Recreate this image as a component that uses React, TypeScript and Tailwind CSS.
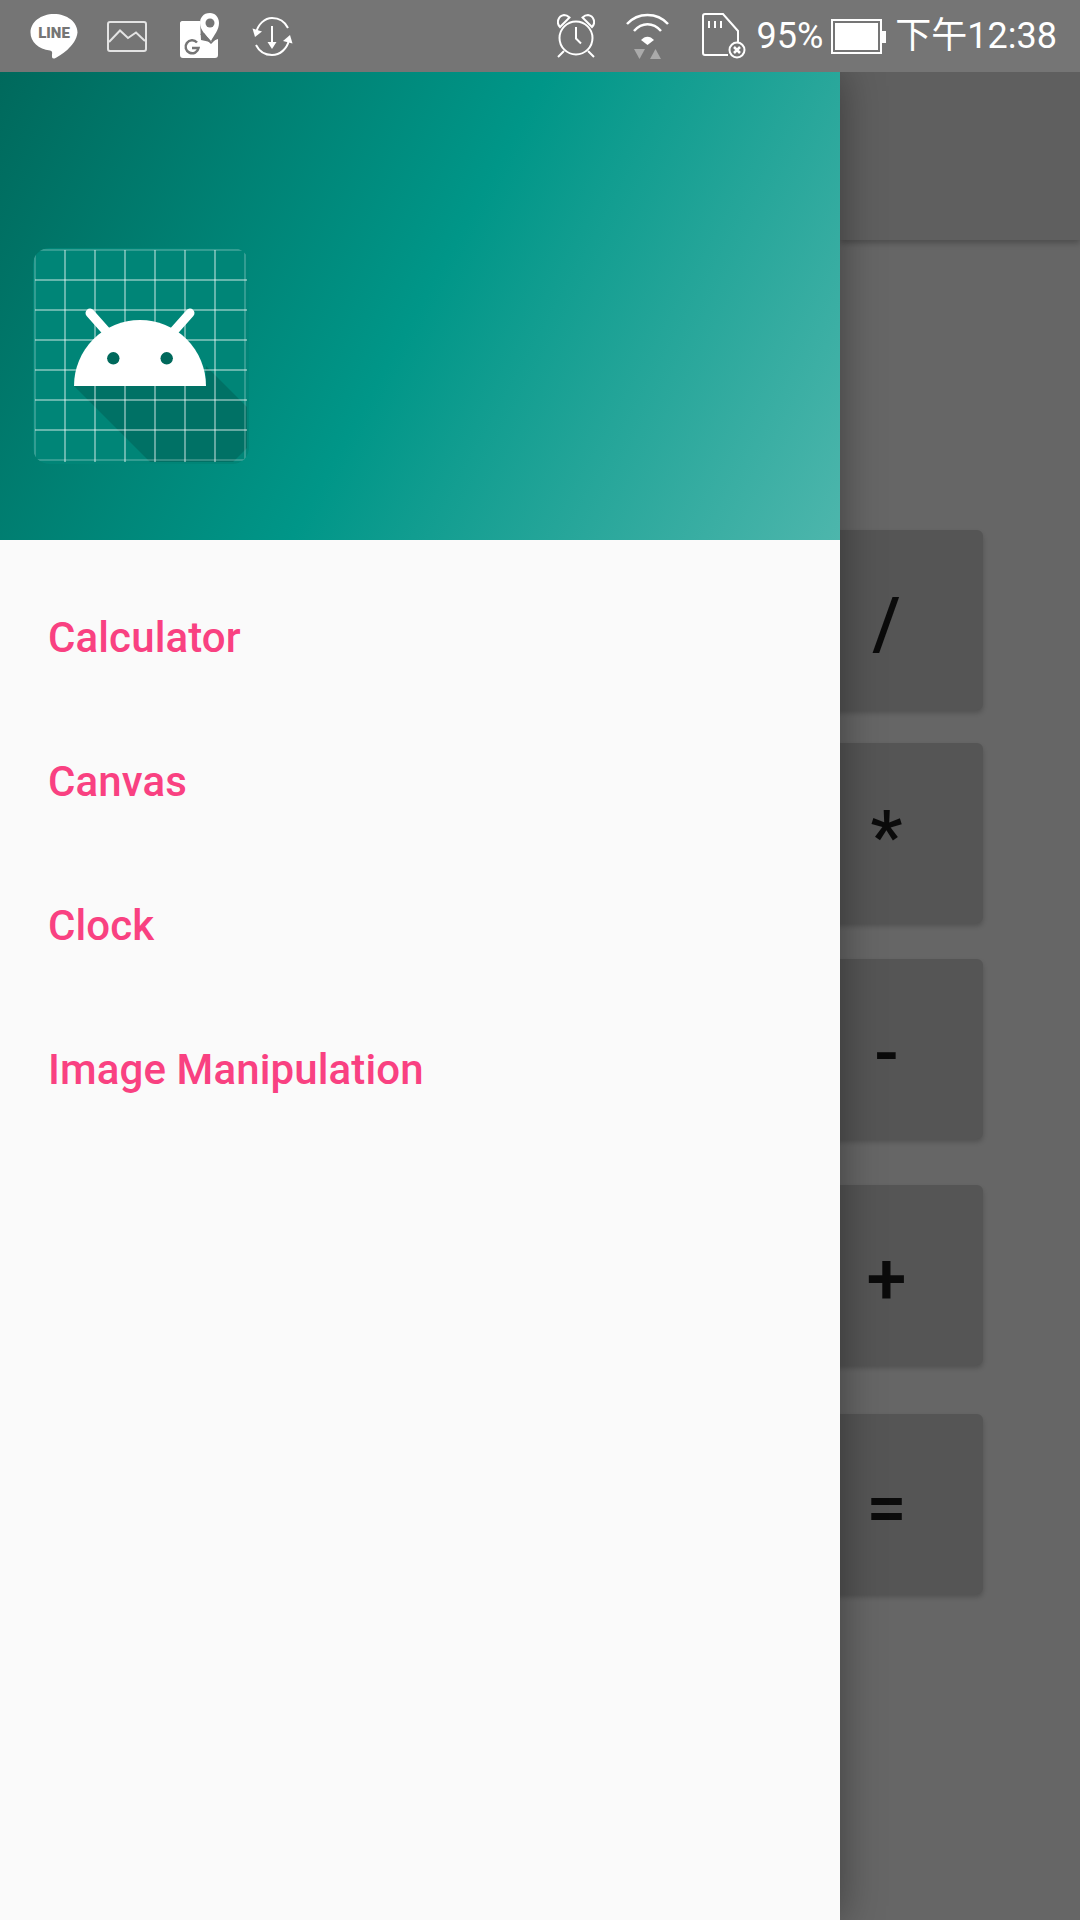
import type { ReactNode } from 'react';

const MENU_ITEMS = ['Calculator', 'Canvas', 'Clock', 'Image Manipulation'];

const KEYS = [
  { label: '/', className: 'mt-[290px]' },
  { label: '*', className: 'mt-[33px]' },
  { label: '-', className: 'mt-[36px]' },
  { label: '+', className: 'mt-[46px]' },
  { label: '=', className: 'mt-[49px]' },
];

const GRID = [2, 32, 62, 92, 122, 152, 182, 212];

function LineIcon() {
  return (
    <svg width="48" height="47" viewBox="0 0 48 47" className="ml-[30px]">
      <path
        d="M24 1C11 1 0.500 9 0.500 19.500C0.500 29 8.500 36 20 37.500C22 38 22.500 39 22 41.500C21.800 44 22 46 24.500 45.500C30 43 46 33 47.500 19.500C47.500 9 37 1 24 1Z"
        fill="#fff"
      />
      <text x="24" y="25" textAnchor="middle" fontFamily="Roboto, sans-serif" fontWeight="900" fontSize="15" fill="#757575">
        LINE
      </text>
    </svg>
  );
}

function ImageIcon() {
  return (
    <svg width="40" height="31" viewBox="0 0 40 31" fill="none" stroke="#fff" strokeWidth="2" className="ml-[29px] opacity-80">
      <rect x="1" y="1" width="38" height="29" rx="2" />
      <path d="M2 21L13 9.500L21 17L29 11.500L38 20" />
    </svg>
  );
}

function MapsIcon() {
  return (
    <svg width="39" height="46" viewBox="0 0 39 46" className="ml-[33px]">
      <path d="M2 8H20L21 27L30 29L38 26V42C38 44 37 45 35 45H3C1 45 0 44 0 42V10C0 9 1 8 2 8Z" fill="#fff" />
      <path d="M30 0C23 0 20 5 20 10C20 17 26 22 31 28C34 22 39 17 39 10C39 4 35 0 30 0Z" fill="#fff" />
      <path d="M24 20L31 29L38 20L38 24L31 31L20 21Z" fill="#757575" />
      <circle cx="30" cy="10" r="4.500" fill="#757575" />
      <path d="M17 29.500A6.500 6.500 0 1 0 18.500 35H12" fill="none" stroke="#757575" strokeWidth="2.500" />
    </svg>
  );
}

function SyncDownIcon() {
  return (
    <svg width="41" height="41" viewBox="0 0 41 41" fill="none" stroke="#fff" strokeWidth="2" className="ml-[33px]">
      <path d="M4 17C6 8 13 2 20 2C27 2 33 6 36 12" />
      <path d="M37 24C35 33 28 39 20 39C13 39 7 35 4 29" />
      <path d="M0.500 12.500L10 15.500L3 21Z" fill="#fff" stroke="none" />
      <path d="M40.500 27.500L31 25L38 19Z" fill="#fff" stroke="none" />
      <path d="M20 10V28" />
      <path d="M15.500 26H24.500L20 33Z" fill="#fff" stroke="none" />
    </svg>
  );
}

function AlarmIcon() {
  return (
    <svg width="38" height="44" viewBox="0 0 38 44" fill="none" stroke="#fff" strokeWidth="2">
      <circle cx="19" cy="24" r="16.500" />
      <path d="M3 13C-1 9 1 2 7 1C9.500 1 11 2 12.500 3.500Z" />
      <path d="M35 13C39 9 37 2 31 1C28.500 1 27 2 25.500 3.500Z" />
      <path d="M19 13V24.500L24 29.500" />
      <path d="M7 37L1 43M31 37L37 43" />
    </svg>
  );
}

function WifiIcon() {
  return (
    <svg width="43" height="46" viewBox="0 0 43 46" fill="none" className="ml-[31px]">
      <path d="M1 11C12 -1 31 -1 42 11" stroke="#fff" strokeWidth="2.500" />
      <path d="M8 18C16 9 27 9 35 18" stroke="#fff" strokeWidth="2.500" />
      <path d="M15 27C19 22.500 24 22.500 28 27L21.500 32Z" fill="#fff" />
      <path d="M8 36H19L13.500 46Z" fill="#aaa" />
      <path d="M24 46H35L29.500 36Z" fill="#aaa" />
    </svg>
  );
}

function SdIcon() {
  return (
    <svg width="44" height="46" viewBox="0 0 44 46" fill="none" stroke="#fff" strokeWidth="2" className="ml-[33px]">
      <path d="M26 42H3C1.500 42 1 41.500 1 40V3C1 1.500 1.500 1 3 1H21L36 18V30" />
      <path d="M7 8V15M13 8V15M19 8V15" />
      <circle cx="35" cy="37" r="7.500" />
      <path d="M32 34L38 40M38 34L32 40" strokeWidth="2.500" />
    </svg>
  );
}

function BatteryIcon() {
  return (
    <svg width="56" height="35" viewBox="0 0 56 35" className="ml-[8px]">
      <rect x="1" y="1" width="49" height="33" fill="none" stroke="#fff" strokeWidth="2" />
      <rect x="4" y="4" width="43" height="27" fill="#fff" />
      <rect x="51" y="12" width="4" height="12" fill="#fff" />
    </svg>
  );
}

function AndroidLogo() {
  return (
    <svg width="216" height="216" viewBox="0 0 216 216" className="rounded-[16px]">
      <rect width="216" height="216" rx="16" fill="#008577" />
      <path d="M41 138H173V118L214 159V200L200 214H117Z" fill="#000" fillOpacity="0.15" />
      {GRID.map((p) => {
        // the outermost lines sit on the edge of the tile and read fainter
        const opacity = p === 2 || p === 212 ? 0.2 : 0.4;
        return (
          <g key={p} stroke="#fff" strokeOpacity={opacity} strokeWidth="2">
            <line x1={p} y1="2" x2={p} y2="214" />
            <line x1="2" y1={p} x2="214" y2={p} />
          </g>
        );
      })}
      <path d="M57 65L73 83M157 65L141 83" stroke="#fff" strokeWidth="9" strokeLinecap="round" />
      <path d="M41 138A66 66 0 0 1 173 138Z" fill="#fff" />
      <circle cx="80.300" cy="110.300" r="6.200" fill="#00695c" />
      <circle cx="133.700" cy="110.300" r="6.200" fill="#00695c" />
    </svg>
  );
}

function KeyButton({ className, children }: { className: string; children: ReactNode }) {
  return (
    <div
      className={`${className} h-[180px] ml-[-50px] w-[193px] pt-[10px] shrink-0 flex items-center justify-center rounded-[6px] bg-[#555555] shadow-[0_3px_5px_rgba(0,0,0,0.2)] text-[72px] leading-none font-medium text-[#0b0b0b]`}
    >
      {children}
    </div>
  );
}

export default function App() {
  return (
    <div className="w-[1080px] h-[1920px] overflow-hidden flex flex-col bg-[#666666] font-['Roboto','Noto_Sans_CJK_SC',sans-serif]">
      <div className="relative z-20 h-[72px] shrink-0 bg-[#757575] flex items-center justify-between pr-[23px]">
        <div className="flex items-center">
          <LineIcon />
          <ImageIcon />
          <MapsIcon />
          <SyncDownIcon />
        </div>
        <div className="flex items-center text-white text-[36px] leading-none">
          <AlarmIcon />
          <WifiIcon />
          <SdIcon />
          <span className="ml-[11px]">95%</span>
          <BatteryIcon />
          <span className="ml-[8px]">下午12:38</span>
        </div>
      </div>

      <div className="flex-1 flex min-h-0">
        <aside className="relative z-10 w-[840px] shrink-0 flex flex-col bg-[#fafafa] shadow-[0_0_40px_rgba(0,0,0,0.4)]">
          <div className="h-[468px] shrink-0 flex items-end pl-[33px] pb-[76px] bg-[linear-gradient(119deg,#00695c,#009688,#4db6ac)]">
            <AndroidLogo />
          </div>
          <nav className="pt-[25px] pl-[48px] flex flex-col">
            {MENU_ITEMS.map((item) => (
              <div key={item} className="h-[144px] flex items-center text-[42px] tracking-[0.12px] font-medium text-[#f94181]">
                {item}
              </div>
            ))}
          </nav>
        </aside>

        <main className="flex-1 min-w-0 flex flex-col">
          <div className="h-[168px] shrink-0 bg-[#5f5f5f] shadow-[0_3px_6px_rgba(0,0,0,0.25)]" />
          {KEYS.map((key) => (
            <KeyButton key={key.label} className={key.className}>
              {key.label}
            </KeyButton>
          ))}
        </main>
      </div>
    </div>
  );
}
